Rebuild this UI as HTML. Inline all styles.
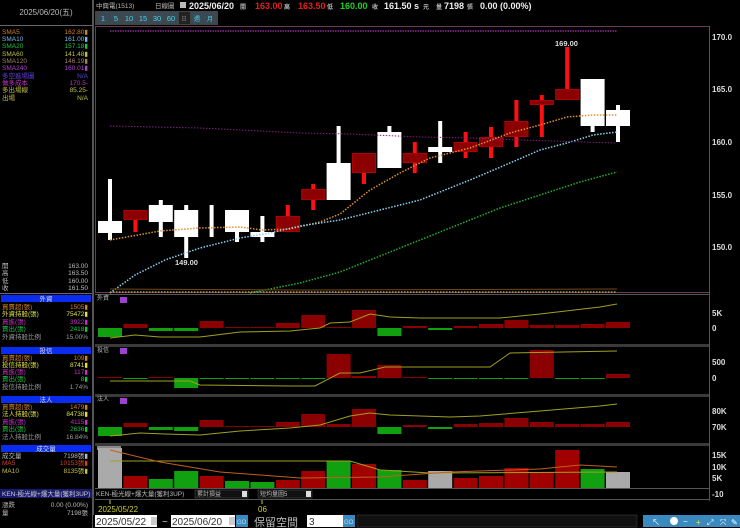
<!DOCTYPE html>
<html><head><meta charset="utf-8"><style>
body{margin:0;background:#000;width:740px;height:528px;overflow:hidden;font-family:"Liberation Sans","Noto Sans CJK TC",sans-serif}
svg{position:absolute;left:0;top:0}
</style></head><body>
<svg id="s" width="740" height="528" xmlns="http://www.w3.org/2000/svg" font-family="Liberation Sans, Noto Sans CJK TC, sans-serif">
<rect width="740" height="528" fill="#000"/>
<rect x="92" y="0" width="2" height="528" fill="#555"/>
<rect x="0" y="25" width="92" height="1" fill="#666"/>
<text x="46" y="15" fill="#bbb" font-size="8" text-anchor="middle">2025/06/20(五)</text>
<g font-size="6.5">
<text x="2" y="34" fill="#d08020">SMA5</text><text x="88" y="34" fill="#d08020" text-anchor="end">162.80▮</text>
<text x="2" y="41" fill="#7ab8e8">SMA10</text><text x="88" y="41" fill="#7ab8e8" text-anchor="end">161.00▮</text>
<text x="2" y="48" fill="#20c040">SMA20</text><text x="88" y="48" fill="#20c040" text-anchor="end">157.18▮</text>
<text x="2" y="56" fill="#c0c040">SMA60</text><text x="88" y="56" fill="#c0c040" text-anchor="end">141.48▮</text>
<text x="2" y="63" fill="#a08060">SMA120</text><text x="88" y="63" fill="#a08060" text-anchor="end">146.19▮</text>
<text x="2" y="70" fill="#b040d0">SMA240</text><text x="88" y="70" fill="#b040d0" text-anchor="end">160.01▮</text>
<text x="2" y="78" fill="#6040e0">多空進場圖</text><text x="88" y="78" fill="#6040e0" text-anchor="end">N/A</text>
<text x="2" y="85" fill="#c030c0">做多成本</text><text x="88" y="85" fill="#c030c0" text-anchor="end">170.5-</text>
<text x="2" y="92" fill="#c0c040">多出場線</text><text x="88" y="92" fill="#c0c040" text-anchor="end">85.25-</text>
<text x="2" y="100" fill="#c0c040">出場</text><text x="88" y="100" fill="#c0c040" text-anchor="end">N/A</text>
<g fill="#bbb"><text x="2" y="268">開</text><text x="88" y="268" text-anchor="end">163.00</text>
<text x="2" y="275">高</text><text x="88" y="275" text-anchor="end">163.50</text>
<text x="2" y="283">低</text><text x="88" y="283" text-anchor="end">160.00</text>
<text x="2" y="290">收</text><text x="88" y="290" text-anchor="end">161.50</text></g>
</g>
<rect x="0" y="293" width="92" height="1" fill="#666"/>
<g font-size="6.5">
<rect x="1" y="295" width="90" height="7" fill="#0a2cf0"/><text x="46" y="301" fill="#ddd" text-anchor="middle">外資</text>
<text x="2" y="309" fill="#d08020">買賣超(張)</text><text x="88" y="309" fill="#d08020" text-anchor="end">1505▮</text>
<text x="2" y="316" fill="#e0e040">外資持股(張)</text><text x="88" y="316" fill="#e0e040" text-anchor="end">75472▮</text>
<text x="2" y="324" fill="#c030c0">買進(張)</text><text x="88" y="324" fill="#c030c0" text-anchor="end">3922▮</text>
<text x="2" y="331" fill="#20c040">賣出(張)</text><text x="88" y="331" fill="#20c040" text-anchor="end">2418▮</text>
<text x="2" y="339" fill="#999">外資持股比例</text><text x="88" y="339" fill="#999" text-anchor="end">15.00%</text>
<rect x="1" y="347" width="90" height="7" fill="#0a2cf0"/><text x="46" y="353" fill="#ddd" text-anchor="middle">投信</text>
<text x="2" y="360" fill="#d08020">買賣超(張)</text><text x="88" y="360" fill="#d08020" text-anchor="end">109▮</text>
<text x="2" y="367" fill="#e0e040">投信持股(張)</text><text x="88" y="367" fill="#e0e040" text-anchor="end">8741▮</text>
<text x="2" y="374" fill="#c030c0">買進(張)</text><text x="88" y="374" fill="#c030c0" text-anchor="end">117▮</text>
<text x="2" y="381" fill="#20c040">賣出(張)</text><text x="88" y="381" fill="#20c040" text-anchor="end">8▮</text>
<text x="2" y="389" fill="#999">投信持股比例</text><text x="88" y="389" fill="#999" text-anchor="end">1.74%</text>
<rect x="1" y="396" width="90" height="7" fill="#0a2cf0"/><text x="46" y="402" fill="#ddd" text-anchor="middle">法人</text>
<text x="2" y="409" fill="#d08020">買賣超(張)</text><text x="88" y="409" fill="#d08020" text-anchor="end">1479▮</text>
<text x="2" y="416" fill="#e0e040">法人持股(張)</text><text x="88" y="416" fill="#e0e040" text-anchor="end">84738▮</text>
<text x="2" y="424" fill="#c030c0">買進(張)</text><text x="88" y="424" fill="#c030c0" text-anchor="end">4115▮</text>
<text x="2" y="431" fill="#20c040">賣出(張)</text><text x="88" y="431" fill="#20c040" text-anchor="end">2636▮</text>
<text x="2" y="439" fill="#999">法人持股比例</text><text x="88" y="439" fill="#999" text-anchor="end">16.84%</text>
<rect x="1" y="445" width="90" height="7" fill="#0a2cf0"/><text x="46" y="451" fill="#ddd" text-anchor="middle">成交量</text>
<text x="2" y="458" fill="#bbb">成交量</text><text x="88" y="458" fill="#bbb" text-anchor="end">7198張▮</text>
<text x="2" y="465" fill="#d04020">MA5</text><text x="88" y="465" fill="#d04020" text-anchor="end">10153張▮</text>
<text x="2" y="473" fill="#c0c040">MA10</text><text x="88" y="473" fill="#c0c040" text-anchor="end">8135張▮</text>
<rect x="0" y="489" width="92" height="9" fill="#1a1a6a"/><text x="2" y="496" fill="#ccc">KEN-極光線+爆大量(獲利3UP)</text>
<text x="2" y="507" fill="#bbb">漲跌</text><text x="88" y="507" fill="#bbb" text-anchor="end">0.00 (0.00%)</text>
<text x="2" y="515" fill="#bbb">量</text><text x="88" y="515" fill="#bbb" text-anchor="end">7198張</text>
</g>
<text x="96" y="8" font-size="6.5" fill="#bbb">中興電(1513)</text>
<text x="155" y="8" font-size="6.5" fill="#bbb">日線圖</text>
<rect x="180" y="2" width="6" height="6" fill="#bbb"/>
<g font-size="9" font-weight="bold"><text x="189" y="9" fill="#eee">2025/06/20</text>
<text x="240" y="9" font-size="6" fill="#bbb">開</text><text x="255" y="9" fill="#e02020">163.00</text>
<text x="284" y="9" font-size="6" fill="#bbb">高</text><text x="298" y="9" fill="#e02020">163.50</text>
<text x="327" y="9" font-size="6" fill="#bbb">低</text><text x="340" y="9" fill="#20d020">160.00</text>
<text x="372" y="9" font-size="6" fill="#bbb">收</text><text x="384" y="9" fill="#eee">161.50 s</text>
<text x="423" y="9" font-size="6" fill="#bbb">元</text><text x="436" y="9" font-size="6" fill="#bbb">量</text><text x="444" y="9" fill="#eee">7198</text>
<text x="467" y="9" font-size="6" fill="#bbb">張</text><text x="480" y="9" fill="#eee">0.00 (0.00%)</text></g>
<rect x="95" y="11" width="123" height="14" fill="#444"/>
<g font-size="7.5" fill="#4fd0e0" text-anchor="middle">
<rect x="97" y="12" width="12" height="12" fill="#3a4a55"/><text x="103" y="21">1</text>
<rect x="110" y="12" width="12" height="12" fill="#3a4a55"/><text x="116" y="21">5</text>
<rect x="123" y="12" width="13" height="12" fill="#3a4a55"/><text x="129" y="21">10</text>
<rect x="137" y="12" width="13" height="12" fill="#3a4a55"/><text x="143" y="21">15</text>
<rect x="151" y="12" width="13" height="12" fill="#3a4a55"/><text x="157" y="21">30</text>
<rect x="165" y="12" width="13" height="12" fill="#3a4a55"/><text x="171" y="21">60</text>
<rect x="179" y="12" width="11" height="12" fill="#222"/><text x="184" y="21" fill="#777" font-size="6">日</text>
<rect x="191" y="12" width="12" height="12" fill="#3a4a55"/><text x="197" y="21" font-size="6">週</text>
<rect x="204" y="12" width="12" height="12" fill="#3a4a55"/><text x="210" y="21" font-size="6">月</text></g>
<rect x="95.5" y="26.5" width="614" height="266" fill="none" stroke="#6a3a5a"/>
<rect x="95" y="294" width="615" height="1" fill="#555"/>
<rect x="95" y="344" width="615" height="3" fill="#3a3a3a"/>
<rect x="95" y="394" width="615" height="3" fill="#3a3a3a"/>
<rect x="95" y="443" width="615" height="3" fill="#3a3a3a"/>
<rect x="95" y="488" width="615" height="1" fill="#555"/>
<rect x="95" y="499" width="615" height="1" fill="#555"/>
<rect x="709" y="26" width="1" height="475" fill="#555"/>
<line x1="110" y1="31" x2="617" y2="31" stroke="#8a2a9a" stroke-width="1.5" stroke-dasharray="1.5,1"/>
<g font-size="8" font-weight="bold" fill="#ddd">
<text x="712" y="40">170.0</text><text x="712" y="92">165.0</text><text x="712" y="145">160.0</text><text x="712" y="198">155.0</text><text x="712" y="250">150.0</text>
<text x="712" y="316">5K</text><text x="712" y="331">0</text><text x="712" y="365">500</text><text x="712" y="381">0</text>
<text x="712" y="414">80K</text><text x="712" y="430">70K</text>
<text x="712" y="458">15K</text><text x="712" y="470">10K</text><text x="712" y="481">5K</text><text x="712" y="497">-10</text>
<text x="555" y="46" font-size="7.5">169.00</text><text x="175" y="265" font-size="7.5">149.00</text></g>
<g font-size="6" fill="#bbb"><text x="97" y="300">外資</text><text x="97" y="352">投信</text><text x="97" y="401">法人</text></g>
<g fill="#a040d0"><rect x="120" y="297" width="7" height="6"/><rect x="120" y="348" width="7" height="6"/><rect x="120" y="398" width="7" height="6"/></g>
<rect x="97" y="446" width="24" height="4" fill="#888"/>
<g id="g"></g>
<text x="96" y="496" font-size="6.5" fill="#bbb">KEN-極光線+爆大量(獲利3UP)</text>
<rect x="195" y="490" width="53" height="8" fill="#111" stroke="#555" stroke-width=".5"/><text x="197" y="496" font-size="6" fill="#bbb">累計損益</text><rect x="242" y="491" width="5" height="6" fill="#ddd"/>
<rect x="258" y="490" width="54" height="8" fill="#111" stroke="#555" stroke-width=".5"/><text x="260" y="496" font-size="6" fill="#bbb">短均量圖5</text><rect x="306" y="491" width="5" height="6" fill="#ddd"/>
<line x1="110" y1="500" x2="110" y2="504" stroke="#cc3"/><line x1="262" y1="500" x2="262" y2="504" stroke="#cc3"/>
<text x="98" y="512" font-size="8" fill="#cc3">2025/05/22</text><text x="258" y="512" font-size="8" fill="#cc3">06</text>
<rect x="93" y="515" width="647" height="13" fill="#000"/>
<rect x="95" y="515" width="62" height="12" fill="#fff"/><text x="96" y="525" font-size="10" fill="#333">2025/05/22</text><rect x="151" y="517" width="6" height="8" fill="#ccc"/>
<text x="162" y="525" font-size="10" fill="#ccc">~</text>
<rect x="171" y="515" width="64" height="12" fill="#fff"/><text x="172" y="525" font-size="10" fill="#333">2025/06/20</text><rect x="229" y="517" width="6" height="8" fill="#ccc"/>
<rect x="236" y="515" width="12" height="12" fill="#3a8ac0"/><text x="237" y="524" font-size="6" fill="#bde">GO</text>
<text x="254" y="526" font-size="11" fill="#bbb">保留空間</text>
<rect x="307" y="515" width="36" height="12" fill="#fff"/><text x="309" y="525" font-size="10" fill="#333">3</text>
<rect x="343" y="515" width="12" height="12" fill="#3a8ac0"/><text x="344" y="524" font-size="6" fill="#bde">GO</text>
<rect x="357" y="515" width="280" height="12" fill="#111" stroke="#444" stroke-width=".5"/>
<rect x="643" y="515" width="97" height="12" fill="#3a8ac0"/>
<g font-size="8" fill="#fff"><text x="652" y="525">↖</text><circle cx="674" cy="521" r="4" fill="#fff"/><text x="683" y="524">−</text><text x="696" y="525" fill="#ee3">+</text><text x="707" y="525">⤢</text><text x="720" y="525">⤧</text><text x="731" y="525">✎</text></g>
</svg>
<script>
var g=document.getElementById('g'),h='';
function X(i){return 110+i*25.4}
function R(x,y,w,hh,c){h+='<rect x="'+x+'" y="'+y+'" width="'+w+'" height="'+hh+'" fill="'+c+'"/>'}
var W='#fff',D='#8b0000',RR='#ff1010';
var c=[[W,221,233,179,240],[D,210,220,210,232],[W,205,222,200,237],[W,210,237,205,258],[W,220,220,205,237],[W,210,232,210,242],[W,232,237,216,242],[D,216,232,205,232],[D,189,200,184,210],[W,163,200,126,200],[D,153,173,153,184],[W,132,168,126,168],[D,153,163,142,173],[W,147,152,121,163],[D,142,152,132,158],[D,137,147,127,158],[D,121,137,100,147],[D,100,105,95,137],[D,89,100,47,100],[W,79,126,79,132],[W,110,126,105,142]];
c.forEach(function(k,i){var x=X(i);R(x-2,k[3],4,k[4]-k[3],k[0]==W?W:RR);if(k[2]>k[1])R(x-12,k[1],24,k[2]-k[1],k[0]);if(k[0]==D)h+='<rect x="'+(x-11.5)+'" y="'+(k[1]+.5)+'" width="23" height="'+(k[2]-k[1]-1)+'" fill="none" stroke="#b00000"/>';});
function L(pts,col,dash,w){h+='<polyline points="'+pts+'" fill="none" stroke="'+col+'" stroke-width="'+(w||1.5)+'"'+(dash?' stroke-dasharray="1.5,1.5"':'')+'/>'}
L('110,240 160,231 200,228 240,227 262,230 290,229 320,222 340,214 370,190 400,173 430,158 470,148 510,133 540,125 567,117 593,115 617,115','#e09030',1);
L('110,293 135,275 165,260 200,248 240,238 270,233 300,226 340,220 380,210 420,200 470,180 510,163 540,150 567,143 593,135 617,132','#8ad0f0',1);
L('250,293 300,283 340,272 380,256 420,240 460,224 500,208 540,195 580,182 617,172','#20b030',1);
L('110,126 200,128 300,133 350,134 420,137 470,138 520,140 617,143','#802080',1,1);
L('110,289 300,290 617,289','#6a4a20',false,1);L('110,292 617,292','#c0a030',true,1.5);
function bars(z,v){v.forEach(function(t,i){var x=X(i)-12;if(t<z)R(x,t,24,z-t,'#8b0000');else R(x,z,24,t-z||1,'#10a010')})}
bars(328,[337,324,331,331,321,327,327,323,315,327,310,336,326,330,326,324,320,325,325,324,322]);
L('110,338 135,335 160,337 200,337 240,332 290,331 320,328 330,323 350,322 370,314 390,317 420,318 460,318 500,318 540,314 600,307 617,304','#a0a020',false,1);
bars(378,[377,378,377,388,379,379,379,379,379,354,376,365,377,379,379,379,379,350,379,379,374]);
L('110,381 190,381 200,385 290,386 315,386 340,373 360,373 385,367 490,367 510,353 617,351','#a0a020',false,1);
bars(427,[436,423,430,431,420,426,426,422,414,424,409,434,425,429,424,423,418,422,424,424,422]);
L('110,436 140,433 165,434 200,435 240,431 290,428 320,425 350,416 370,413 390,415 420,416 450,417 480,416 540,411 600,406 617,404','#a0a020',false,1);
var vh=[448,476,479,471,476,481,482,480,471,461,464,470,480,471,478,476,468,472,450,469,472],vc='GRGGRGGRRGRGRWRRRRRGW';
vh.forEach(function(t,i){var col={G:'#10a010',R:'#a00000',W:'#aaa'}[vc[i]];if(i==0)col='#aaa';R(X(i)-12,t,24,488-t,col)});
L('110,461 350,461 380,470 430,473 617,472','#a0a020',false,1);
L('110,450 160,462 220,472 300,478 380,477 450,472 540,469 580,465 617,467','#c06020',false,1);
g.innerHTML=h;
</script>
</body></html>
